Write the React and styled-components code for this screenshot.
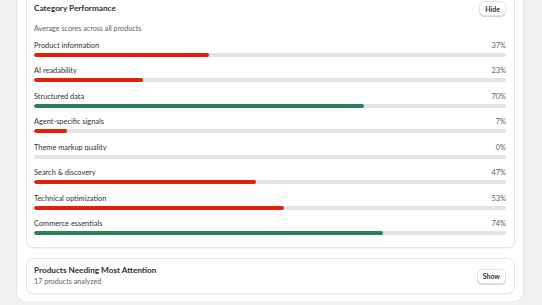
import React from 'react';
import styled, { createGlobalStyle } from 'styled-components';

const GlobalStyle = createGlobalStyle`
  html, body {
    margin: 0;
    padding: 0;
    background: #f1f1f1;
    font-family: Lato, "Open Sans", "Liberation Sans", sans-serif;
    color: #303030;
    overflow: hidden;
  }
`;

const categories = [
  { name: 'Product information', score: 37 },
  { name: 'AI readability', score: 23 },
  { name: 'Structured data', score: 70 },
  { name: 'Agent-specific signals', score: 7 },
  { name: 'Theme markup quality', score: 0 },
  { name: 'Search & discovery', score: 47 },
  { name: 'Technical optimization', score: 53 },
  { name: 'Commerce essentials', score: 74 },
];

const Page = styled.div`
  width: 506px;
  margin: -11px 0 0 17px;
`;

const Outer = styled.section`
  background: #ffffff;
  border-radius: 0 0 9px 9px;
  box-shadow: 0 0 0 1px #e6e6e6, 0 1px 2px rgba(0, 0, 0, 0.06);
  padding: 0 8px 7px 9px;
  display: flex;
  flex-direction: column;
  gap: 10px;
`;

const Card = styled.div`
  background: #ffffff;
  border: 1px solid #e6e6e6;
  border-radius: 7px;
  box-shadow: 0 1px 1px rgba(0, 0, 0, 0.04);
  padding: ${(p) => p.$padding};
`;

const HeaderRow = styled.div`
  display: flex;
  align-items: center;
  justify-content: space-between;
`;

const Title = styled.h2`
  margin: 0;
  font-size: 8.2px;
  line-height: 11px;
  font-weight: 700;
  color: #303030;
`;

const Subtitle = styled.p`
  margin: ${(p) => p.$margin || '0'};
  font-size: 7.2px;
  line-height: 10px;
  color: #616161;
`;

const Button = styled.button`
  font-family: inherit;
  font-size: 7px;
  font-weight: 700;
  color: #303030;
  background: #ffffff;
  border: 1px solid #e3e3e3;
  border-radius: 5px;
  box-shadow: 0 1px 0 #d4d4d4;
  height: 15px;
  padding: 0 5px;
  cursor: pointer;
`;

const List = styled.div`
  display: flex;
  flex-direction: column;
  gap: 9.45px;
  margin-top: 7px;
`;

const Row = styled.div`
  display: flex;
  flex-direction: column;
  gap: 2px;
`;

const RowTop = styled.div`
  display: flex;
  justify-content: space-between;
  font-size: 7.4px;
  line-height: 10px;
`;

const Label = styled.span`
  color: #303030;
`;

const Percent = styled.span`
  color: #616161;
`;

const Track = styled.div`
  height: 4px;
  border-radius: 2px;
  background: #e3e3e3;
  overflow: hidden;
`;

const Fill = styled.div`
  height: 100%;
  border-radius: 2px;
  background: ${(p) => (p.$good ? '#2a7f57' : '#e2200c')};
`;

function CategoryRow({ name, score }) {
  return (
    <Row>
      <RowTop>
        <Label>{name}</Label>
        <Percent>{score}%</Percent>
      </RowTop>
      <Track>
        <Fill $good={score >= 70} style={{ width: `${score}%` }} />
      </Track>
    </Row>
  );
}

export default function App() {
  return (
    <>
      <GlobalStyle />
      <Page>
        <Outer>
          <Card $padding="11px 8px 12px 7px">
            <HeaderRow>
              <Title>Category Performance</Title>
              <Button>Hide</Button>
            </HeaderRow>
            <Subtitle $margin="8px 0 0">Average scores across all products</Subtitle>
            <List>
              {categories.map((c) => (
                <CategoryRow key={c.name} {...c} />
              ))}
            </List>
          </Card>
          <Card $padding="6px 8px 6px 7px">
            <HeaderRow>
              <div>
                <Title>Products Needing Most Attention</Title>
                <Subtitle $margin="1px 0 0">17 products analyzed</Subtitle>
              </div>
              <Button>Show</Button>
            </HeaderRow>
          </Card>
        </Outer>
      </Page>
    </>
  );
}
